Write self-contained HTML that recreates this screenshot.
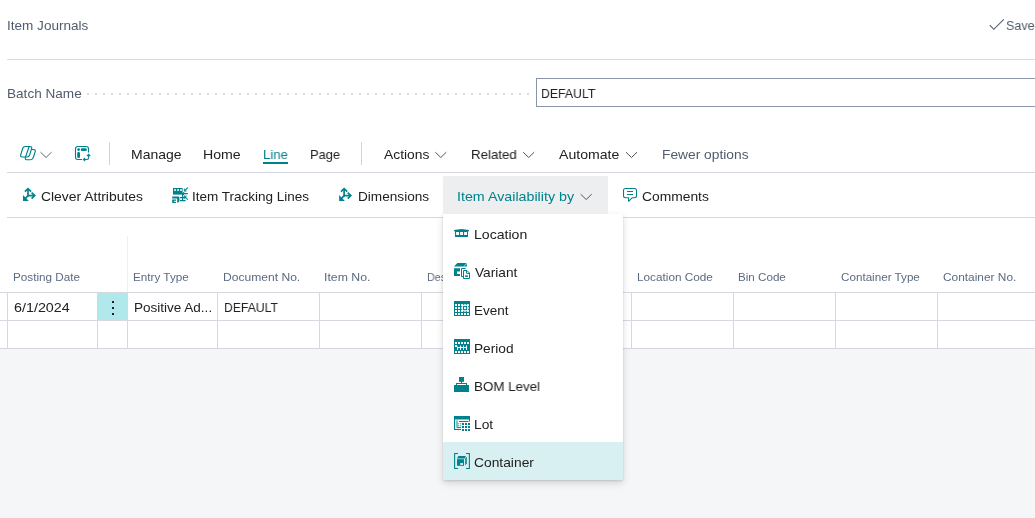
<!DOCTYPE html>
<html lang="en"><head><meta charset="utf-8"><title>Item Journals</title>
<style>
html,body{margin:0;padding:0;}
body{width:1035px;height:518px;position:relative;overflow:hidden;background:#fff;
 font-family:"Liberation Sans",sans-serif;}
.t{position:absolute;white-space:nowrap;line-height:20px;transform-origin:0 50%;will-change:transform;}
.a{position:absolute;}
.hl{position:absolute;height:1px;background:#d5d8de;}
.vl{position:absolute;width:1px;background:#d5d8de;}
svg{position:absolute;overflow:visible;}
</style></head><body>

<div class="a" style="left:0;top:349px;width:1035px;height:169px;background:#f5f6f8"></div>
<div class="hl" style="left:7px;top:59px;width:1028px;background:#d9dce1"></div>
<div class="a" style="left:87px;top:93px;width:442px;height:2px;background:repeating-linear-gradient(90deg,#d9dbdf 0 2px,transparent 2px 8px)"></div>
<div class="a" style="left:536px;top:78px;width:520px;height:27px;border:1px solid #8a96a8;background:#fff"></div>
<svg style="left:0;top:0" width="1035" height="60"><path d="M989.8 25.2 L993.8 29.3 L1003.8 19.3" fill="none" stroke="#505c6d" stroke-width="1.1"/></svg>
<div class="hl" style="left:7px;top:172px;width:1028px"></div>
<div class="vl" style="left:109px;top:142px;height:23px;background:#d0d3d9"></div>
<div class="vl" style="left:361px;top:142px;height:23px;background:#d0d3d9"></div>
<div class="a" style="left:263px;top:162px;width:25px;height:2px;background:#00828c"></div>
<div class="hl" style="left:7px;top:217px;width:1028px"></div>
<div class="a" style="left:443px;top:176px;width:165px;height:38px;background:#eceef0;border-radius:2px 2px 0 0"></div>
<div class="hl" style="left:0;top:292px;width:1035px"></div>
<div class="hl" style="left:0;top:320px;width:1035px"></div>
<div class="hl" style="left:0;top:348px;width:1035px"></div>
<div class="vl" style="left:7px;top:293px;height:55px"></div>
<div class="vl" style="left:97px;top:293px;height:55px"></div>
<div class="vl" style="left:127px;top:293px;height:55px"></div>
<div class="vl" style="left:217px;top:293px;height:55px"></div>
<div class="vl" style="left:319px;top:293px;height:55px"></div>
<div class="vl" style="left:421px;top:293px;height:55px"></div>
<div class="vl" style="left:631px;top:293px;height:55px"></div>
<div class="vl" style="left:733px;top:293px;height:55px"></div>
<div class="vl" style="left:835px;top:293px;height:55px"></div>
<div class="vl" style="left:937px;top:293px;height:55px"></div>
<div class="vl" style="left:127px;top:236px;height:56px;background:#efefef"></div>
<div class="a" style="left:98px;top:293px;width:29px;height:27px;background:#b1e8ec"></div>
<div class="a" style="left:111.5px;top:300.8px;width:2px;height:2px;background:#111;border-radius:0.5px"></div>
<div class="a" style="left:111.5px;top:306.8px;width:2px;height:2px;background:#111;border-radius:0.5px"></div>
<div class="a" style="left:111.5px;top:312.8px;width:2px;height:2px;background:#111;border-radius:0.5px"></div>
<svg style="left:0;top:0" width="1035" height="518" viewBox="0 0 1035 518">
<g fill="none" stroke="#00828c" stroke-width="1.15" stroke-linejoin="round">
<path d="M25.3 146.5 H30 Q32.3 146.5 31.6 148.7 L29.6 155 Q29 157 27 157 H22.3 Q20 157 20.7 154.8 L22.7 148.5 Q23.3 146.5 25.3 146.5 Z"/>
<path d="M31.2 149.5 H33.6 Q35.9 149.5 35.2 151.7 L33.2 157.7 Q32.6 159.7 30.6 159.7 H26.6 Q24.6 159.7 25.5 157.2 L28.8 147.5 Q29.1 146.6 29.8 146.5"/>
</g>
<path d="M40.50 152.20 L46.00 157.50 L51.50 152.20" fill="none" stroke="#666" stroke-width="1.0"/>
<g fill="none" stroke="#00828c" stroke-width="1.1">
<path d="M82 159.5 H77.7 Q75.5 159.5 75.5 157.3 V148.7 Q75.5 146.5 77.7 146.5 H86.3 Q88.5 146.5 88.5 148.7 V152.6"/>
<path d="M88.6 158 V154.6 M86.9 156.2 L88.6 154.4 L90.3 156.2 M88.6 157.8 Q88.6 159.5 87 159.5 H83.6 M85.2 157.9 L83.4 159.5 L85.2 161.1"/>
</g>
<circle cx="78.6" cy="149.6" r="1.4" fill="#00828c"/>
<rect x="80.8" y="148.2" width="6" height="2.8" rx="1.3" fill="#00828c"/>
<rect x="77.2" y="152.1" width="2.8" height="5.9" rx="1.3" fill="#00828c"/>
<path d="M435.30 152.20 L440.80 157.50 L446.30 152.20" fill="none" stroke="#555" stroke-width="1.0"/>
<path d="M523.20 152.20 L528.70 157.50 L534.20 152.20" fill="none" stroke="#555" stroke-width="1.0"/>
<path d="M626.00 152.20 L631.50 157.50 L637.00 152.20" fill="none" stroke="#555" stroke-width="1.0"/>
<g stroke="#00828c" stroke-width="1.7" fill="none" stroke-linecap="butt" stroke-linejoin="miter">
<path d="M28 196.4 V189.0"/>
<path d="M24.9 191.7 L28 188.6 L31.1 191.7"/>
<path d="M27.5 195.6 H34.4"/>
<path d="M31.6 192.6 L34.7 195.6 L31.6 198.6"/>
<path d="M28 195.6 L24.4 199.5"/>
</g>
<path d="M23.0 195.0 V201.0 H28.8 Z" fill="#00828c"/>
<g stroke="#00828c" stroke-width="1.7" fill="none" stroke-linecap="butt" stroke-linejoin="miter">
<path d="M344.1 196.4 V189.0"/>
<path d="M341.0 191.7 L344.1 188.6 L347.20000000000005 191.7"/>
<path d="M343.6 195.6 H350.5"/>
<path d="M347.70000000000005 192.6 L350.8 195.6 L347.70000000000005 198.6"/>
<path d="M344.1 195.6 L340.5 199.5"/>
</g>
<path d="M339.1 195.0 V201.0 H344.90000000000003 Z" fill="#00828c"/>
<g fill="#00828c">
<rect x="173" y="188" width="9.6" height="6.6"/>
</g>
<rect x="174.2" y="189.2" width="1.7" height="1.7" fill="#fff"/>
<rect x="177.2" y="189.2" width="1.7" height="1.7" fill="#fff"/>
<rect x="180.2" y="189.2" width="1.7" height="1.7" fill="#fff"/>
<g fill="none" stroke="#00828c" stroke-width="1.2">
<path d="M182.6 194 V200.6 M180 197.6 H185.6 M180 200.6 H185.6"/>
<path d="M182.3 193.6 H187.8 M187.8 187.6 L184.6 190.6 M187.8 199.6 L184.6 196.6"/>
<path d="M184.3 188.6 V191 H186.6 M184.3 198.6 V196.2 H186.6 M184.3 191.8 L182.8 193.6 L184.3 195.4" stroke-width="1"/>
</g>
<path d="M172.2 196.6 H178.6 L179.4 197.2 V201.6 L177.2 203 V198.4 H172.2 Z M172.2 199.6 H176 V203 H172.2 Z" fill="#00828c"/>
<rect x="174" y="200.8" width="2" height="1" fill="#fff"/>
<g fill="none" stroke="#00828c" stroke-width="1.05" stroke-linejoin="round">
<path d="M625.5 188.5 H634.5 Q636.5 188.5 636.5 190.5 V195.7 Q636.5 197.7 634.5 197.7 H632.3 L628.6 201.3 V197.7 H625.5 Q623.5 197.7 623.5 195.7 V190.5 Q623.5 188.5 625.5 188.5 Z"/>
<path d="M627 191.4 H633 M627 194.4 H633"/>
</g>
</svg>
<span class="t" style="left:7.09px;top:15.54px;font-size:13.5px;color:#505c6d;transform:scaleX(1.0035)">Item Journals</span>
<span class="t" style="left:1006.20px;top:15.54px;font-size:13.5px;color:#505c6d;transform:scaleX(0.9300)">Saved</span>
<span class="t" style="left:6.74px;top:83.54px;font-size:13.5px;color:#505c6d;transform:scaleX(1.0058)">Batch Name</span>
<span class="t" style="left:540.70px;top:83.54px;font-size:13.5px;color:#212121;transform:scaleX(0.9085)">DEFAULT</span>
<span class="t" style="left:130.91px;top:144.54px;font-size:13.5px;color:#212121;transform:scaleX(1.0359)">Manage</span>
<span class="t" style="left:203.47px;top:144.54px;font-size:13.5px;color:#212121;transform:scaleX(1.0468)">Home</span>
<span class="t" style="left:263.03px;top:144.54px;font-size:13.5px;color:#00838a;transform:scaleX(0.9741)">Line</span>
<span class="t" style="left:309.86px;top:144.54px;font-size:13.5px;color:#212121;transform:scaleX(0.9524)">Page</span>
<span class="t" style="left:383.52px;top:144.54px;font-size:13.5px;color:#212121;transform:scaleX(1.0248)">Actions</span>
<span class="t" style="left:470.71px;top:144.54px;font-size:13.5px;color:#212121;transform:scaleX(0.9840)">Related</span>
<span class="t" style="left:559.30px;top:144.54px;font-size:13.5px;color:#212121;transform:scaleX(1.0443)">Automate</span>
<span class="t" style="left:661.53px;top:144.54px;font-size:13.5px;color:#505c6d;transform:scaleX(1.0204)">Fewer options</span>
<span class="t" style="left:41.34px;top:186.54px;font-size:13.5px;color:#212121;transform:scaleX(1.0294)">Clever Attributes</span>
<span class="t" style="left:192.11px;top:186.54px;font-size:13.5px;color:#212121;transform:scaleX(0.9965)">Item Tracking Lines</span>
<span class="t" style="left:357.56px;top:186.54px;font-size:13.5px;color:#212121;transform:scaleX(1.0085)">Dimensions</span>
<span class="t" style="left:642.00px;top:186.54px;font-size:13.5px;color:#212121;transform:scaleX(1.0240)">Comments</span>
<span class="t" style="left:12.94px;top:267.47px;font-size:11.6px;color:#5c6a82;transform:scaleX(1.0110)">Posting Date</span>
<span class="t" style="left:132.76px;top:267.47px;font-size:11.6px;color:#5c6a82;transform:scaleX(1.0100)">Entry Type</span>
<span class="t" style="left:222.76px;top:267.47px;font-size:11.6px;color:#5c6a82;transform:scaleX(1.0420)">Document No.</span>
<span class="t" style="left:324.25px;top:267.47px;font-size:11.6px;color:#5c6a82;transform:scaleX(1.0600)">Item No.</span>
<span class="t" style="left:426.50px;top:267.47px;font-size:11.6px;color:#5c6a82;transform:scaleX(0.9300)">Description</span>
<span class="t" style="left:636.76px;top:267.47px;font-size:11.6px;color:#5c6a82;transform:scaleX(1.0150)">Location Code</span>
<span class="t" style="left:738.40px;top:267.47px;font-size:11.6px;color:#5c6a82;transform:scaleX(1.0029)">Bin Code</span>
<span class="t" style="left:841.29px;top:267.47px;font-size:11.6px;color:#5c6a82;transform:scaleX(1.0056)">Container Type</span>
<span class="t" style="left:943.35px;top:267.47px;font-size:11.6px;color:#5c6a82;transform:scaleX(1.0252)">Container No.</span>
<span class="t" style="left:14.04px;top:297.84px;font-size:13.5px;color:#212121;transform:scaleX(1.0610)">6/1/2024</span>
<span class="t" style="left:134.17px;top:297.84px;font-size:13.5px;color:#212121;transform:scaleX(1.0012)">Positive Ad...</span>
<span class="t" style="left:223.79px;top:297.84px;font-size:13.5px;color:#212121;transform:scaleX(0.9022)">DEFAULT</span>
<div class="a" style="left:443px;top:214px;width:180px;height:266px;background:#fff;box-shadow:0 3.2px 7.2px rgba(0,0,0,0.15), 0 0.6px 1.8px rgba(0,0,0,0.12)"></div>
<div class="a" style="left:443px;top:176px;width:165px;height:38px;background:#eceef0;border-radius:2px 2px 0 0"></div>
<div class="a" style="left:443px;top:442px;width:180px;height:38px;background:#d9f0f3"></div>
<svg style="left:0;top:0" width="1035" height="518" viewBox="0 0 1035 518">
<path d="M580.70 194.20 L586.20 199.50 L591.70 194.20" fill="none" stroke="#555" stroke-width="1.0"/>
<path d="M454 231.2 V230 L461.5 229 L469 230 V231.2 Z" fill="#00828c"/>
<rect x="455" y="231" width="13" height="6" fill="#00828c"/>
<rect x="456.1" y="232" width="2.9" height="3" fill="#fff"/>
<rect x="460.1" y="232" width="2.9" height="3" fill="#fff"/>
<rect x="464.1" y="232" width="2.9" height="3" fill="#fff"/>
<path d="M457.4 263 H466.6 L467 266.6 H454 Z" fill="#00828c"/>
<path d="M466.5 263.2 L464 266.4" stroke="#fff" stroke-width="0.6"/>
<path d="M454 268.2 H460 V271.6 H457 V274 H460 V276 H454 Z" fill="#00828c"/>
<g fill="none" stroke="#00828c" stroke-width="1">
<path d="M465.6 268.5 H461.5 V276.6 H463"/>
<path d="M463.5 270.5 H467 L469.5 273 V278.5 H463.5 Z" fill="#fff"/>
<path d="M466.6 270.8 V273.4 H469.3"/>
</g>
<rect x="465" y="275.4" width="3" height="1.5" fill="#00828c"/>
<rect x="454" y="301" width="16" height="15" fill="#00828c"/>
<rect x="455" y="304" width="2" height="2" rx="0.3" fill="#fff"/>
<rect x="458" y="304" width="2" height="2" rx="0.3" fill="#fff"/>
<rect x="455" y="307" width="2" height="2" rx="0.3" fill="#fff"/>
<rect x="458" y="307" width="2" height="2" rx="0.3" fill="#fff"/>
<rect x="455" y="310" width="2" height="2" rx="0.3" fill="#fff"/>
<rect x="458" y="310" width="2" height="2" rx="0.3" fill="#fff"/>
<rect x="455" y="313" width="2" height="2" rx="0.3" fill="#fff"/>
<rect x="458" y="313" width="2" height="2" rx="0.3" fill="#fff"/>
<rect x="461" y="313" width="2" height="2" rx="0.3" fill="#fff"/>
<rect x="464" y="313" width="2" height="2" rx="0.3" fill="#fff"/>
<rect x="467" y="313" width="2" height="2" rx="0.3" fill="#fff"/>
<rect x="461.1" y="304.1" width="7.8" height="7.8" fill="#fff"/>
<rect x="462.9" y="305.9" width="4.3" height="4.3" fill="#00828c"/>
<rect x="464" y="307" width="2.1" height="2.1" fill="#fff"/>
<rect x="463.2" y="304" width="1" height="1" fill="#00828c"/>
<rect x="465.8" y="304" width="1" height="1" fill="#00828c"/>
<rect x="463.2" y="311" width="1" height="1" fill="#00828c"/>
<rect x="465.8" y="311" width="1" height="1" fill="#00828c"/>
<rect x="461" y="306.2" width="1" height="1" fill="#00828c"/>
<rect x="461" y="308.8" width="1" height="1" fill="#00828c"/>
<rect x="468" y="306.2" width="1" height="1" fill="#00828c"/>
<rect x="468" y="308.8" width="1" height="1" fill="#00828c"/>
<rect x="454" y="339" width="16" height="15" fill="#00828c"/>
<rect x="455" y="342" width="2" height="2" rx="0.3" fill="#fff"/>
<rect x="458" y="342" width="2" height="2" rx="0.3" fill="#fff"/>
<rect x="461" y="342" width="2" height="2" rx="0.3" fill="#fff"/>
<rect x="464" y="342" width="2" height="2" rx="0.3" fill="#fff"/>
<rect x="467" y="342" width="2" height="2" rx="0.3" fill="#fff"/>
<rect x="455" y="351" width="2" height="2" rx="0.3" fill="#fff"/>
<rect x="458" y="351" width="2" height="2" rx="0.3" fill="#fff"/>
<rect x="461" y="351" width="2" height="2" rx="0.3" fill="#fff"/>
<rect x="464" y="351" width="2" height="2" rx="0.3" fill="#fff"/>
<rect x="467" y="351" width="2" height="2" rx="0.3" fill="#fff"/>
<rect x="455" y="345" width="2" height="2" rx="0.3" fill="#fff"/>
<path d="M457.5 347.5 H466.8 M457.5 346.5 V350 M460.5 345.5 V350 M463.5 345.5 V350 M466.5 345.5 V350" stroke="#fff" stroke-width="1" fill="none"/>
<rect x="459" y="377" width="5" height="4.8" fill="#00828c"/>
<rect x="461" y="381" width="1" height="2.5" fill="#00828c"/>
<rect x="456" y="383" width="11" height="3" fill="#00828c"/>
<rect x="457" y="384" width="9" height="1" fill="#fff"/>
<rect x="454" y="385" width="15" height="7" fill="#00828c"/>
<path d="M454 416 H470 V421.6 H469 V419.4 H455.1 V429 H461 V430 H454 Z" fill="#00828c"/>
<path d="M457 420.4 V427.6 H461" fill="none" stroke="#00828c" stroke-width="1"/>
<path d="M459 421.5 H468.5" fill="none" stroke="#00828c" stroke-width="1"/>
<path d="M460 420.5 H462 M463.4 420.5 H465.4" stroke="#fff" stroke-width="0.8"/>
<rect x="462" y="423" width="2" height="2" fill="#00828c"/>
<rect x="465" y="423" width="2" height="2" fill="#00828c"/>
<rect x="468" y="423" width="2" height="2" fill="#00828c"/>
<rect x="462" y="426" width="2" height="2" fill="#00828c"/>
<rect x="465" y="426" width="2" height="2" fill="#00828c"/>
<rect x="468" y="426" width="2" height="2" fill="#00828c"/>
<rect x="462" y="429" width="2" height="2" fill="#00828c"/>
<rect x="465" y="429" width="2" height="2" fill="#00828c"/>
<rect x="468" y="429" width="2" height="2" fill="#00828c"/>
<rect x="458.2" y="423.3" width="1" height="1" fill="#00828c"/>
<rect x="460.2" y="423.3" width="1" height="1" fill="#00828c"/>
<rect x="458.2" y="425.3" width="1" height="1" fill="#00828c"/>
<rect x="460.2" y="425.3" width="1" height="1" fill="#00828c"/>
<g fill="none" stroke="#00828c" stroke-width="1.1">
<path d="M458 453.5 H454.6 V468.5 H458 M466 453.5 H469.4 V468.5 H466"/>
</g>
<path d="M458.4 456 H466 L464.6 458.4 H457 Z" fill="#00828c"/>
<rect x="457" y="459.2" width="7" height="6.6" fill="#00828c"/>
<path d="M465.2 458.6 L466.8 456.8 V463.4 L465.2 465.6 Z" fill="#00828c"/>
<rect x="460.2" y="463.2" width="2.8" height="1.6" fill="#fff"/>
</svg>
<span class="t" style="left:456.85px;top:186.54px;font-size:13.5px;color:#00838a;transform:scaleX(1.0566)">Item Availability by</span>
<span class="t" style="left:474.01px;top:224.54px;font-size:13.5px;color:#212121;transform:scaleX(1.0436)">Location</span>
<span class="t" style="left:474.54px;top:262.54px;font-size:13.5px;color:#212121;transform:scaleX(1.0127)">Variant</span>
<span class="t" style="left:473.61px;top:300.54px;font-size:13.5px;color:#212121;transform:scaleX(0.9948)">Event</span>
<span class="t" style="left:474.09px;top:338.54px;font-size:13.5px;color:#212121;transform:scaleX(1.0125)">Period</span>
<span class="t" style="left:474.01px;top:376.54px;font-size:13.5px;color:#212121;transform:scaleX(0.9896)">BOM Level</span>
<span class="t" style="left:474.39px;top:414.54px;font-size:13.5px;color:#212121;transform:scaleX(1.0212)">Lot</span>
<span class="t" style="left:474.10px;top:452.54px;font-size:13.5px;color:#212121;transform:scaleX(1.0236)">Container</span>
</body></html>
